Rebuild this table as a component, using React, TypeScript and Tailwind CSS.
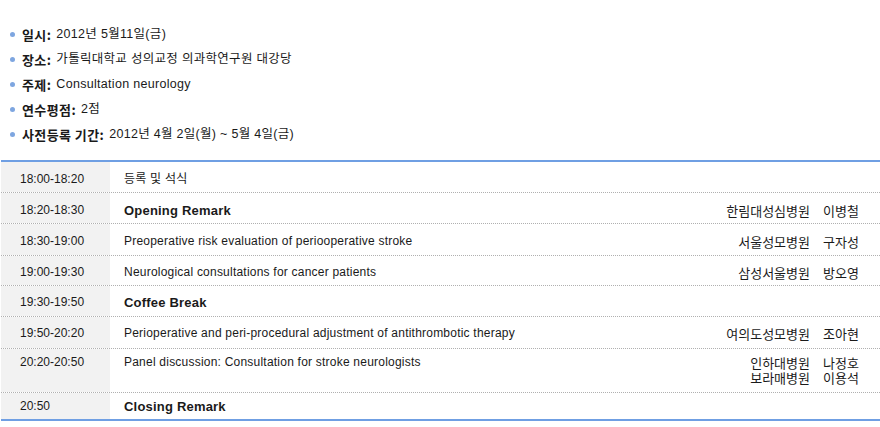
const info = [
  { label: '일시:', value: '2012년 5월11일(금)' },
  { label: '장소:', value: '가톨릭대학교 성의교정 의과학연구원 대강당' },
  { label: '주제:', value: 'Consultation neurology' },
  { label: '연수평점:', value: '2점' },
  { label: '사전등록 기간:', value: '2012년 4월 2일(월) ~ 5월 4일(금)' },
];

type Row = {
  time: string;
  title: string;
  bold?: boolean;
  speakers?: [string, string][];
  h: string;
  pt: string;
};

const rows: Row[] = [
  { time: '18:00-18:20', title: '등록 및 석식', h: 'h-[31px]', pt: 'pt-[10px]' },
  { time: '18:20-18:30', title: 'Opening Remark', bold: true, speakers: [['한림대성심병원', '이병철']], h: 'h-[31px]', pt: 'pt-[10px]' },
  { time: '18:30-19:00', title: 'Preoperative risk evaluation of periooperative stroke', speakers: [['서울성모병원', '구자성']], h: 'h-[32px]', pt: 'pt-[10px]' },
  { time: '19:00-19:30', title: 'Neurological consultations for cancer patients', speakers: [['삼성서울병원', '방오영']], h: 'h-[30px]', pt: 'pt-[9px]' },
  { time: '19:30-19:50', title: 'Coffee Break', bold: true, h: 'h-[31px]', pt: 'pt-[9px]' },
  { time: '19:50-20:20', title: 'Perioperative and peri-procedural adjustment of antithrombotic therapy', speakers: [['여의도성모병원', '조아현']], h: 'h-[32px]', pt: 'pt-[9px]' },
  { time: '20:20-20:50', title: 'Panel discussion: Consultation for stroke neurologists', speakers: [['인하대병원', '나정호'], ['보라매병원', '이용석']], h: 'h-[44px]', pt: 'pt-[6px]' },
  { time: '20:50', title: 'Closing Remark', bold: true, h: 'h-[26px]', pt: 'pt-[6px]' },
];

function App() {
  return (
    <div className="w-[880px] h-[427px] bg-white text-[#1a1a1a] text-[12px] font-['Liberation_Sans','Noto_Sans_CJK_KR',sans-serif]">
      <ul className="pt-[22px] pb-[13px]">
        {info.map((it) => (
          <li key={it.label} className="flex items-center h-[25px] pl-[10px]">
            <span className="w-[5px] h-[5px] rounded-full bg-[#7ea6e0] mr-[7px]" />
            <span className="font-bold text-[13px] tracking-[0.4px] font-['Noto_Sans_CJK_KR',sans-serif] mr-[5px]">{it.label}</span>
            <span className="tracking-[0.3px] text-[12.5px]">{it.value}</span>
          </li>
        ))}
      </ul>

      <div className="ml-px w-[879px] border-t-2 border-b-2 border-[#6f9fe3]">
        {rows.map((r, i) => (
          <div
            key={r.time}
            className={`flex ${r.h} ${i < rows.length - 1 ? 'border-b border-dotted border-[#b0b0b0]' : ''}`}
          >
            <div className={`w-[109px] shrink-0 bg-[#f2f2f2] pl-[19px] ${r.pt} leading-[15px]`}>{r.time}</div>
            <div className={`flex-1 pl-[14px] ${r.pt} leading-[15px] tracking-[0.22px]`}>
              {r.bold ? (
                <span className="font-bold text-[13px] tracking-[0.2px]">{r.title}</span>
              ) : (
                r.title
              )}
            </div>
            {r.speakers && (
              <div className={`${r.pt} pr-[21px] font-['Noto_Sans_CJK_KR',sans-serif] text-[13px]`}>
                {r.speakers.map(([hosp, name]) => (
                  <div key={name} className="flex h-[15px] leading-[15px]">
                    <span className="text-right">{hosp}</span>
                    <span className="w-[36px] ml-[13px]">{name}</span>
                  </div>
                ))}
              </div>
            )}
          </div>
        ))}
      </div>
    </div>
  );
}

export default App;
